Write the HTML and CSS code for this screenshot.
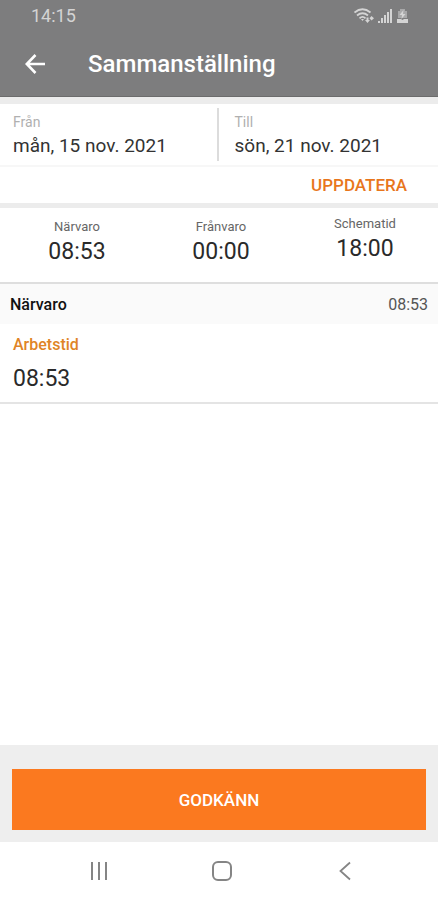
FILE: index.html
```
<!DOCTYPE html>
<html lang="sv">
<head>
    <meta charset="UTF-8">
    <meta name="viewport" content="width=device-width, initial-scale=1.0">
    <title>Sammanställning</title>
    <link rel="stylesheet" href="styles.css">
</head>
<body>

<header class="header">
    <div class="status-bar">
        <span>14:15</span>
        <div class="status-icons">
            <!-- wifi -->
            <svg width="20" height="16" viewBox="0 0 20 16" fill="none" stroke="currentColor" stroke-width="1.8">
                <path d="M0.500 4.500 Q8.500 -2 16.500 4.500"/>
                <path d="M3 7.500 Q8.500 3 14 7.500"/>
                <path d="M5.500 10.300 Q8.500 7.500 11.500 10.300"/>
                <path d="M7 11 H10 L8.500 13 Z M11 12 H16 L13.500 15 Z M12.500 9.500 H14.500 V12 H12.500 Z M17.500 8 L20 10.300 L17.500 12.500 L15.500 10.300 Z" fill="currentColor" stroke="none"/>
            </svg>
            <!-- signal -->
            <svg width="15" height="16" viewBox="0 0 15 16" fill="currentColor">
                <rect x="0" y="13" width="2" height="2"/>
                <rect x="3" y="10" width="2" height="5"/>
                <rect x="6" y="7" width="2" height="8"/>
                <rect x="9" y="4" width="2" height="11"/>
                <rect x="12" y="1" width="2" height="14"/>
            </svg>
            <!-- battery -->
            <svg width="11" height="16" viewBox="0 0 11 16" fill="currentColor">
                <path d="M3 1 H8 V3 H10 V10 H1 V3 H3 Z" opacity="0.5"/>
                <path d="M6.500 2 L2.500 7 H5 L4.500 11 L8.500 6 H6 Z"/>
                <path d="M0 11 H4 L5.500 12 L7 11 H11 V15 H0 Z"/>
            </svg>
        </div>
    </div>
    <div class="title-bar">
        <button class="back" aria-label="Tillbaka">
            <svg width="20" height="20" viewBox="0 0 20 20" fill="none" stroke="currentColor" stroke-width="2.6">
                <path d="M20 10 H2 M10.500 1 L1.800 10 L10.500 19"/>
            </svg>
        </button>
        <h1>Sammanställning</h1>
    </div>
</header>

<main>
    <form class="period">
        <div class="dates">
            <div class="date">
                <label for="from">Från</label>
                <input type="text" id="from" value="mån, 15 nov. 2021" readonly>
            </div>
            <div class="date">
                <label for="to">Till</label>
                <input type="text" id="to" value="sön, 21 nov. 2021" readonly>
            </div>
        </div>
        <div class="update-row">
            <button type="button" class="update">UPPDATERA</button>
        </div>
    </form>

    <div class="summary">
        <div class="total">
            <span class="label">Närvaro</span>
            <span class="time">08:53</span>
        </div>
        <div class="total">
            <span class="label">Frånvaro</span>
            <span class="time">00:00</span>
        </div>
        <div class="total schedule">
            <span class="label">Schematid</span>
            <span class="time">18:00</span>
        </div>
    </div>

    <section>
        <div class="section-header">
            <h2>Närvaro</h2>
            <span>08:53</span>
        </div>
        <div class="entry">
            <h3>Arbetstid</h3>
            <span class="time">08:53</span>
        </div>
    </section>
</main>

<footer class="footer">
    <button class="approve">GODKÄNN</button>
</footer>

<nav class="nav">
    <button aria-label="Senaste appar">
        <svg width="20" height="20" viewBox="0 0 20 20" fill="none" stroke="currentColor" stroke-width="2">
            <path d="M3 1 V19 M10 1 V19 M17 1 V19"/>
        </svg>
    </button>
    <button aria-label="Hem">
        <svg width="20" height="20" viewBox="0 0 20 20" fill="none" stroke="currentColor" stroke-width="2">
            <rect x="1" y="1" width="18" height="18" rx="5"/>
        </svg>
    </button>
    <button aria-label="Bakåt">
        <svg width="20" height="20" viewBox="0 0 20 20" fill="none" stroke="currentColor" stroke-width="1.8">
            <path d="M15 1.500 L5.500 10 L15 18.500"/>
        </svg>
    </button>
</nav>

</body>
</html>
```
FILE: styles.css
```
* {
    box-sizing: border-box;
}

body {
    display: flex;
    flex-direction: column;
    min-height: 100vh;
    margin: 0;
    font-family: Roboto, sans-serif;
    background-color: #fff;
    color: #2a2a2a;
}

h1, h2, h3 {
    margin: 0;
}

button {
    padding: 0;
    border: none;
    background: none;
    font-family: inherit;
    cursor: pointer;
}

svg {
    display: block;
}

.header {
    background-color: #7d7d7e;
    border-bottom: 1px solid #6c6c6c;
    color: #fff;
}

.status-bar {
    display: flex;
    justify-content: space-between;
    align-items: center;
    height: 31px;
    padding: 0 30px 0 31px;
    font-size: 18px;
    color: #d4d4d4;
}

.status-icons {
    display: flex;
    gap: 4px;
}

.title-bar {
    display: flex;
    align-items: center;
    gap: 43px;
    height: 65px;
    padding: 0 25px;
}

.back {
    color: #fff;
}

h1 {
    font-size: 24px;
    font-weight: 500;
}

main {
    flex: 1;
}

.period {
    border-top: 7px solid #ececec;
    border-bottom: 5px solid #ececec;
}

.dates {
    display: flex;
    padding: 4px 0;
    border-bottom: 2px solid #f7f7f7;
}

.date {
    flex: 1;
    min-width: 0;
    padding: 5px 0 2px 13px;
}

.date + .date {
    padding-left: 16px;
    border-left: 2px solid #dcdcdc;
}

.date label {
    display: block;
    font-size: 14px;
    line-height: 18px;
    color: #b0b0b0;
}

.date input {
    display: block;
    width: 100%;
    height: 28px;
    padding: 0;
    border: none;
    outline: none;
    background: none;
    font-family: inherit;
    font-size: 19px;
    color: #333;
}

.update-row {
    display: flex;
    justify-content: flex-end;
    padding: 0 31px;
}

.update {
    height: 36px;
    font-size: 17px;
    font-weight: 500;
    color: #e8761c;
}

.summary {
    display: grid;
    grid-template-columns: repeat(3, 1fr);
    padding: 7px 1px 14px 5px;
    border-bottom: 2px solid #dedede;
}

.total {
    display: flex;
    flex-direction: column;
    align-items: center;
    padding-top: 3px;
}

.schedule {
    padding-top: 0;
}

.label {
    font-size: 13px;
    line-height: 18px;
    color: #666;
}

.time {
    font-size: 23px;
    line-height: 32px;
}

.section-header {
    display: flex;
    justify-content: space-between;
    align-items: center;
    height: 40px;
    padding: 0 10px;
    background-color: #fafafa;
    font-size: 16px;
    color: #555;
}

h2 {
    font-size: 16px;
    font-weight: 500;
    color: #111;
}

.entry {
    padding: 9px 13px 7px;
    border-bottom: 2px solid #e4e4e4;
}

.entry .time {
    display: block;
}

h3 {
    margin-bottom: 6px;
    font-size: 16px;
    line-height: 24px;
    font-weight: 500;
    color: #df8426;
}

.footer {
    padding: 24px 12px 12px;
    background-color: #eeeeee;
}

.approve {
    display: block;
    width: 100%;
    height: 61px;
    background-color: #fb791f;
    font-size: 17px;
    font-weight: 500;
    color: #fff;
}

.nav {
    display: flex;
    justify-content: space-around;
    align-items: center;
    height: 58px;
    padding: 0 32px 0 37px;
}

.nav button {
    color: #858585;
}
```
